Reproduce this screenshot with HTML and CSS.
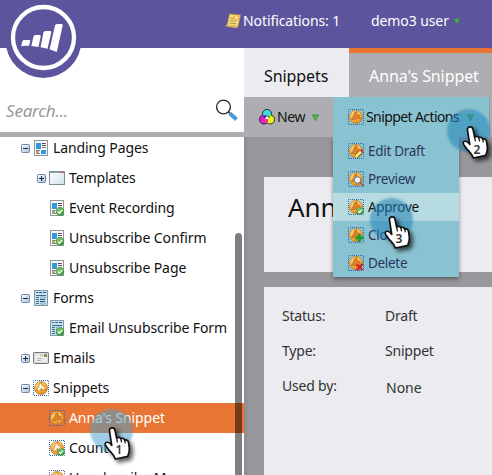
FILE: index.html
```html
<!DOCTYPE html>
<html lang="en">
<head>
<meta charset="utf-8">
<title>Snippets</title>
<link rel="stylesheet" href="styles.css">
</head>
<body>
<svg class="defs" width="0" height="0">
  <defs>
    <radialGradient id="gold" cx=".4" cy=".3" r=".8"><stop offset="0" stop-color="#ffe08a"/><stop offset=".6" stop-color="#f3ac3e"/><stop offset="1" stop-color="#d0801f"/></radialGradient>
    <linearGradient id="box" x1="0" y1="0" x2="1" y2="1"><stop offset="0" stop-color="#fff"/><stop offset="1" stop-color="#a9bcd8"/></linearGradient>
    <linearGradient id="paper" x1="0" y1="0" x2="1" y2="1"><stop offset="0" stop-color="#fff"/><stop offset="1" stop-color="#cfe3ef"/></linearGradient>
    <radialGradient id="ok" cx=".4" cy=".3" r=".8"><stop offset="0" stop-color="#7cc668"/><stop offset="1" stop-color="#2c8a30"/></radialGradient>
    <symbol id="minus" viewBox="0 0 9 9"><rect x=".5" y=".5" width="8" height="8" rx="1" fill="url(#box)" stroke="#7188aa"/><path d="M2 4.500h5" stroke="#17284a"/></symbol>
    <symbol id="plus" viewBox="0 0 9 9"><rect x=".5" y=".5" width="8" height="8" rx="1" fill="url(#box)" stroke="#7188aa"/><path d="M2 4.500h5M4.500 2v5" stroke="#17284a"/></symbol>
    <symbol id="check" viewBox="0 0 9 9"><circle cx="4.500" cy="4.500" r="4.300" fill="url(#ok)"/><path d="M2.200 4.600l1.700 1.700 3-3.400" fill="none" stroke="#fff" stroke-width="1.400"/></symbol>
    <symbol id="page" viewBox="0 0 16 16"><rect x="1.500" y=".5" width="13" height="15" fill="#f5f9fb" stroke="#8e979d"/><path d="M3 3h5v6H3z" fill="#3398dd"/><path d="M9 3.500h2" stroke="#444"/><path d="M11 3.500h2" stroke="#c34"/><path d="M9 5.500h4" stroke="#555"/><path d="M9 7.500h2" stroke="#d33"/><path d="M11 7.500h2" stroke="#4a5"/><path d="M8 10h5v4H8z" fill="#3398dd"/><path d="M3 10.500h4M3 13.500h4" stroke="#a98a3c"/><path d="M3 12h3" stroke="#555"/></symbol>
    <symbol id="pageok" viewBox="0 0 16 16"><use href="#page" width="16" height="16"/><use href="#check" x="6.500" y="7" width="9" height="9"/></symbol>
    <symbol id="window" viewBox="0 0 16 16"><rect x=".5" y="1.500" width="15" height="13" fill="url(#paper)" stroke="#7d8e98"/><path d="M1 2.500h14" stroke="#8fa2ac"/><path d="M12 2.500h3" stroke="#e25a3c"/></symbol>
    <symbol id="form" viewBox="0 0 16 16"><rect x="1.500" y=".5" width="13" height="15" fill="#c3e3f5" stroke="#8499a6"/><path d="M3 2.500h2M6 2.500h3M10 2.500h3M7 9.500h5M7 11.500h5" stroke="#3a5469"/><path d="M3 5.500h10M3 7.500h3M3 9.500h3M3 11.500h3M3 13.500h3" stroke="#446985"/><path d="M7.500 7h5v1h-5zM7.500 13h5v1h-5z" fill="#fff" stroke="#5c91b4" stroke-width=".6"/></symbol>
    <symbol id="formok" viewBox="0 0 16 16"><use href="#form" width="16" height="16"/><use href="#check" x="6.500" y="7" width="9" height="9"/></symbol>
    <symbol id="mail" viewBox="0 0 16 16"><rect x=".5" y="2.500" width="15" height="11" rx=".8" fill="#d9dad9" stroke="#737775"/><path d="M2 4.500h12v7.500H2z" fill="#ecedea"/><path d="M11 4h3v3h-3z" fill="#7c9149"/><path d="M7 5.500h3M4 8.500h5M4 10.500h4" stroke="#b4b6b4"/></symbol>
    <symbol id="snip" viewBox="0 0 16 16"><rect x=".5" y=".5" width="15" height="15" fill="none" stroke="#2c6bb2" stroke-dasharray="1 1" stroke-dashoffset=".5"/><circle cx="8" cy="8" r="6.600" fill="url(#gold)" stroke="#bd7420" stroke-width=".6"/><path d="M6.500 3.500L8.500 3l1 3 2.300.5.4 3-2.200.3-1.500-1.600-2 2.800-2.800-.8 1.800-3.200z" fill="#fff3df" stroke="#b66b22" stroke-width=".6"/><path d="M8.500 1.500v2M2.500 11l1.500-1M12 9.500l2 1M8.500 8.500v5.500" stroke="#b66b22" stroke-width=".6"/></symbol>
    <symbol id="sniphole" viewBox="0 0 16 16"><rect x=".5" y=".5" width="15" height="15" fill="none" stroke="#2c6bb2" stroke-dasharray="1 1" stroke-dashoffset=".5"/><circle cx="8" cy="8" r="6.600" fill="url(#gold)" stroke="#bd7420" stroke-width=".6"/><path class="hole" d="M6.500 3.500L8.500 3l1 3 2.300.5.4 3-2.200.3-1.500-1.600-2 2.800-2.800-.8 1.800-3.200z" stroke="#b66b22" stroke-width=".7"/><path d="M8.500 1.500v2M2.500 11l1.500-1M12 9.500l2 1M8.500 8.500v5.500" stroke="#b66b22" stroke-width=".6"/></symbol>
    <symbol id="arrow" viewBox="0 0 7 7"><path d="M.3.8h6.400L3.900 6.400h-.8z" fill="#4db04b" stroke="#2c8e3c" stroke-width=".6"/></symbol>
    <symbol id="hand" viewBox="0 0 28 34"><path d="M7.500 1.500C9.300 1.300 10.500 2.500 10.700 4l1.500 7.500c1-1.300 3.200-1.200 4 .4 1.500-1 3.200-.2 3.800 1.400 1.500-.7 3.200 0 3.600 1.800.6 3 1.200 6 .7 9.200-.4 2-1.400 3.200-1.200 4.700L11 31.500c-1.200-4.500-4.800-6.500-7.200-10-1.200-1.600-2.800-3.200-2.700-4.600.4-2.200 3.300-2 4.800-.4l1.600 1.800L5.300 4.500C5 3 5.800 1.700 7.500 1.500z" fill="#fff" stroke="#111" stroke-width="1.600" stroke-linejoin="round"/><path d="M12.200 11.500l.8 4M16.200 12l.8 3.500M20 13.500l.6 3" stroke="#111" stroke-width="1.200"/></symbol>
  </defs>
</svg>
<div class="app">
  <header class="top">
    <div class="logo">
      <svg width="76" height="78" viewBox="0 0 76 78"><circle cx="37.500" cy="40" r="38" fill="#5c559e"/><circle cx="37.500" cy="37.500" r="30.500" fill="none" stroke="#fff" stroke-width="4.300"/><g fill="#fff"><path d="M16.500 41q.5-1 1.700-1h5q1.400 0 1 1.300l-1.200 4.400-7.800.2z"/><path d="M27.500 36.500q.4-1.500 1.800-1.500h4.200q1.500 0 1.200 1.300L32.500 47l-7.200-.9z"/><path d="M37.500 32.500q.4-1.500 1.800-1.500h4.700q1.500 0 1.200 1.400L41.500 48.800l-7-1.500z"/><path d="M49 25.500q.4-1.500 1.800-1.500h4.700q1.500 0 1.200 1.500L50.800 52l-7.200-2.800z"/></g></svg>
    </div>
    <div class="note">
      <svg width="16" height="16" viewBox="0 0 16 16"><path d="M4.500 1l11 1-2.500 11.500-11-1z" fill="#f6dc82" stroke="#b58c38" stroke-width=".7"/><path d="M5.500 5l3.500.4M5 7.500l6.500.6M4.500 10l6.500.6" stroke="#9e802e" stroke-width=".8"/><circle cx="11.500" cy="4.500" r="2.800" fill="#f6b35c"/><circle cx="11.500" cy="4.500" r="1.200" fill="#fff0c8"/><path d="M.8 12.500l10.700 1.800 1.500-3" fill="none" stroke="#e1b953" stroke-width="1.500"/></svg>
      <span>Notifications: 1</span>
    </div>
    <div class="user"><span>demo3 user</span><svg width="6" height="6"><use href="#arrow"/></svg></div>
  </header>
  <div class="main">
    <aside class="side">
      <div class="search"><span>Search...</span>
        <svg width="24" height="24" viewBox="0 0 24 24"><circle cx="8.500" cy="8" r="6.900" fill="#fff" stroke="#2b2b2b" stroke-width="1.400"/><path d="M13 12.500l2 2" stroke="#2b2b2b" stroke-width="1.600"/><path d="M15 14.500l6.500 6" stroke="#459bd5" stroke-width="4"/></svg>
      </div>
      <div class="treebox">
      <ul class="tree">
        <li><svg class="tog"><use href="#minus"/></svg><svg class="ic"><use href="#page"/></svg><span>Landing Pages</span></li>
        <li class="sub"><svg class="tog"><use href="#plus"/></svg><svg class="ic"><use href="#window"/></svg><span>Templates</span></li>
        <li class="sub leaf"><svg class="ic"><use href="#pageok"/></svg><span>Event Recording</span></li>
        <li class="sub leaf"><svg class="ic"><use href="#pageok"/></svg><span>Unsubscribe Confirm</span></li>
        <li class="sub leaf"><svg class="ic"><use href="#pageok"/></svg><span>Unsubscribe Page</span></li>
        <li><svg class="tog"><use href="#minus"/></svg><svg class="ic"><use href="#form"/></svg><span>Forms</span></li>
        <li class="sub leaf"><svg class="ic"><use href="#formok"/></svg><span>Email Unsubscribe Form</span></li>
        <li><svg class="tog"><use href="#plus"/></svg><svg class="ic"><use href="#mail"/></svg><span>Emails</span></li>
        <li><svg class="tog"><use href="#minus"/></svg><svg class="ic"><use href="#snip"/></svg><span>Snippets</span></li>
        <li class="sub leaf on"><svg class="ic"><use href="#sniphole"/></svg><span>Anna's Snippet</span></li>
        <li class="sub leaf"><svg class="ic"><use href="#snip"/><use href="#check" x="8" y="8" width="8" height="8"/></svg><span>Count</span></li>
        <li class="sub leaf"><svg class="ic"><use href="#snip"/></svg><span>Unsubscribe Me</span></li>
      </ul>
      <div class="thumb"></div>
      </div>
    </aside>
    <section class="work">
      <nav class="tabs"><div class="tab">Snippets</div><div class="tab active">Anna's Snippet</div></nav>
      <div class="bar">
        <div class="new">
          <svg width="16" height="16" viewBox="0 0 16 16"><circle cx="8" cy="5" r="4.500" fill="#35dfe0"/><circle cx="5" cy="10.500" r="4.500" fill="#e81bd5"/><circle cx="11" cy="10.500" r="4.500" fill="#f4e72c"/><path d="M4 7.500a4.500 4.500 0 0 0 4 2l1.500-2A4.500 4.500 0 0 0 4 7.500" fill="#3230d8"/><path d="M12 7a4.500 4.500 0 0 1-4 2.500l-1-2Q9 6 12 7" fill="#28ad35"/><path d="M8 8.500q-2 2.500 0 5 2-2.500 0-5" fill="#e02424"/><g fill="none" stroke="#222" stroke-width=".9"><path d="M3.700 6.200a4.500 4.500 0 1 1 8.600 0 4.500 4.500 0 1 1-4.300 7.600 4.500 4.500 0 1 1-4.300-7.600z"/></g><circle cx="8" cy="9" r="1.300" fill="#fff"/></svg>
          <span>New</span><svg width="7" height="7"><use href="#arrow"/></svg>
        </div>
      </div>
      <div class="canvas">
        <div class="panel title"><h1>Anna</h1></div>
        <dl class="panel facts">
          <dt>Status:</dt><dd>Draft</dd>
          <dt>Type:</dt><dd>Snippet</dd>
          <dt>Used by:</dt><dd class="none">None</dd>
        </dl>
      </div>
      <div class="menu">
        <div class="head"><svg class="ic"><use href="#sniphole"/></svg><span>Snippet Actions</span><svg width="7" height="7"><use href="#arrow"/></svg></div>
        <ul>
          <li><svg class="ic" viewBox="0 0 16 16"><use href="#sniphole"/><path d="M7.500 14l6-6" stroke="#775b27" stroke-width="4"/><path d="M7.500 14l5.500-5.500" stroke="#ffe681" stroke-width="2.600"/><path d="M13 8.500l1.500-1.500" stroke="#d4362e" stroke-width="3"/></svg><span>Edit Draft</span></li>
          <li><svg class="ic" viewBox="0 0 16 16"><use href="#sniphole"/><circle cx="9.500" cy="9" r="3.200" fill="#eef9ff" stroke="#6f7880"/><path d="M12 11.500l3.500 3.500" stroke="#a9642a" stroke-width="2"/></svg><span>Preview</span></li>
          <li class="hover"><svg class="ic"><use href="#sniphole"/><use href="#check" x="8" y="8" width="8" height="8"/></svg><span>Approve</span></li>
          <li><svg class="ic" viewBox="0 0 16 16"><use href="#sniphole"/><path d="M11.500 7v8M7.500 11h8" stroke="#1b9b32" stroke-width="2.800"/></svg><span>Clone</span></li>
          <li><svg class="ic" viewBox="0 0 16 16"><use href="#sniphole"/><path d="M8.500 9.500l6 5.500M14.500 9l-5.500 6.500" stroke="#d51e1e" stroke-width="2.100"/></svg><span>Delete</span></li>
        </ul>
      </div>
    </section>
  </div>
  <div class="step one"><i></i><svg width="29" height="36"><use href="#hand"/></svg><b>1</b></div>
  <div class="step two"><i></i><svg width="29" height="36"><use href="#hand"/></svg><b>2</b></div>
  <div class="step three"><i></i><svg width="29" height="36"><use href="#hand"/></svg><b>3</b></div>
</div>
</body>
</html>
```
FILE: styles.css
```css
* { box-sizing: border-box; }
body { margin: 0; font: 14px/20px "Noto Sans", "Open Sans", sans-serif; letter-spacing: -.09px; color: #111; overflow: hidden; }
ul, dl, dd, h1 { margin: 0; padding: 0; list-style: none; }
svg { display: block; flex: none; overflow: visible; }
span { white-space: nowrap; }
.defs { position: absolute; }
.app { position: relative; width: 492px; height: 475px; overflow: hidden; display: flex; flex-direction: column; background: #fff; }
.top { position: relative; flex: none; height: 48px; background: #5c559e; color: #fff; display: flex; padding: 11px 0 0 225px; z-index: 2; }
.logo { position: absolute; left: 6px; top: 0; }
.note { display: flex; gap: 2px; width: 146px; }
.note svg { margin-top: 2px; }
.user { display: flex; gap: 5px; }
.user svg { margin-top: 7px; }
.main { flex: 1; display: flex; min-height: 0; }
.side { width: 244px; display: flex; flex-direction: column; background: #fff; }
.search { height: 89px; flex: none; border-bottom: 5px solid #aeadb2; display: flex; justify-content: space-between; padding: 51px 5px 0 6px; font-size: 17px; line-height: 24px; letter-spacing: -.2px; font-style: italic; color: #999; }
.treebox { position: relative; flex: 1; overflow: hidden; }
.tree { margin-top: -4px; }
.tree li { height: 30px; display: flex; align-items: center; padding-left: 21px; }
.tree li.sub { padding-left: 37px; }
.tree li.leaf { padding-left: 49px; }
.tree li.on { background: #e87533; color: #fff; }
.tog { width: 9px; height: 9px; margin-right: 3px; }
.ic { width: 16px; height: 16px; margin-right: 4px; }
.hole { fill: #e0812f; }
.menu .hole { fill: #a5c6b3; }
.thumb { position: absolute; left: 235px; top: 96px; width: 7px; height: 300px; border-radius: 4px; background: rgba(0,0,0,.5); }
.work { position: relative; width: 248px; display: flex; flex-direction: column; }
.tabs { display: flex; height: 49px; flex: none; font-size: 16px; line-height: 22px; background: #aeadb2; }
.tab { width: 105px; padding: 17px 0 0 20px; background: #ecebf0; white-space: nowrap; }
.tab.active { width: 143px; padding-top: 12px; border-top: 5px solid #e87533; background: #aeadb2; color: #fff; }
.bar { height: 40px; flex: none; background: #aeadb2; padding: 10px 0 0 15px; }
.new { display: flex; gap: 2px; letter-spacing: -.4px; }
.new svg { margin-top: 2px; }
.new svg + span + svg { margin: 7px 0 0 5px; }
.canvas { flex: 1; background: linear-gradient(90deg, #8d8c91, #98979c 6px); padding: 40px 0 0 20px; display: flex; flex-direction: column; gap: 15px; }
.panel { background: #ecebf0; }
.title { height: 95px; padding: 12px 0 0 24px; overflow: hidden; }
h1 { font-size: 26px; font-weight: 400; line-height: 36px; white-space: nowrap; }
.facts { flex: 1; display: grid; grid-template-columns: 103px 1fr; grid-auto-rows: 35px; padding: 19px 0 0 18px; letter-spacing: -.2px; color: #333; }
.facts .none { padding: 2px 0 0 1px; letter-spacing: 0; }
.menu { position: absolute; left: 89px; top: 49px; width: 156px; color: #2d3563; z-index: 1; }
.head { height: 40px; background: #89c3d1; color: #111; display: flex; padding: 10px 0 0 15px; box-shadow: 1px 0 #98979c; letter-spacing: -.6px; }
.head .ic { margin: 2px 2px 0 0; }
.head span + svg { margin: 7px 0 0 8px; }
.menu ul { width: 126px; background: #89c3d1; box-shadow: 0 2px 4px rgba(0,0,0,.4); clip-path: inset(0 -6px -8px -6px); }
.menu li { height: 28px; display: flex; align-items: center; padding-left: 15px; font-size: 13.500px; letter-spacing: -.3px; }
.menu .hover { background: #b6dbe0; color: #111; }
.step { position: absolute; width: 43px; height: 54px; z-index: 5; }
.step i { position: absolute; left: 0; top: 0; width: 43px; height: 43px; border-radius: 50%; background: rgba(32,132,184,.55); filter: blur(1px); }
.step svg { position: absolute; left: 14px; top: 17px; filter: drop-shadow(3px 3px 2px rgba(0,0,0,.65)); }
.step b { position: absolute; left: 22px; top: 33px; width: 14px; text-align: center; font: 600 12px/16px "Noto Sans", sans-serif; color: #333; }
.one { left: 90px; top: 409px; }
.one i { background: rgba(70,160,205,.52); }
.two { left: 447px; top: 109px; }
.two svg { left: 15px; top: 16px; }
.two b { left: 23px; top: 33px; }
.three { left: 370px; top: 198px; }
```
